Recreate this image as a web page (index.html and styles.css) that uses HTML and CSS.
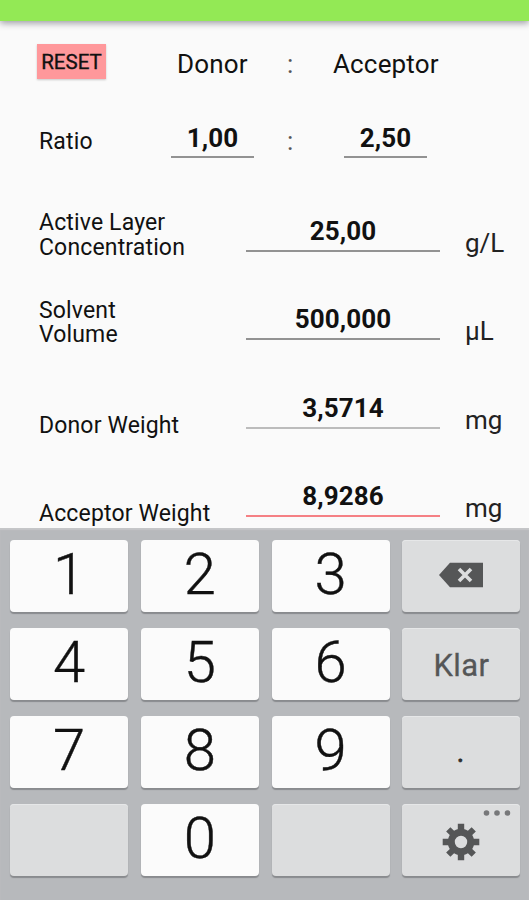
FILE: index.html
```html
<!DOCTYPE html>
<html lang="en">
<head>
<meta charset="utf-8">
<title>Solution calculator</title>
<link rel="stylesheet" href="styles.css">
</head>
<body>
<div class="screen">
  <header class="appbar"></header>
  <main class="form">
    <div class="row row-head">
      <button class="reset">RESET</button>
      <span class="heading">Donor</span>
      <span class="colon">:</span>
      <span class="heading heading-acceptor">Acceptor</span>
    </div>
    <div class="row row-ratio">
      <span class="label">Ratio</span>
      <span class="field">1,00</span>
      <span class="colon">:</span>
      <span class="field field-acceptor">2,50</span>
    </div>
    <div class="row row-value row-concentration">
      <span class="label">Active Layer<br>Concentration</span>
      <span class="field">25,00</span>
      <span class="unit">g/L</span>
    </div>
    <div class="row row-value row-volume">
      <span class="label label-tight">Solvent<br>Volume</span>
      <span class="field">500,000</span>
      <span class="unit">µL</span>
    </div>
    <div class="row row-value">
      <span class="label label-single">Donor Weight</span>
      <span class="field field-soft">3,5714</span>
      <span class="unit">mg</span>
    </div>
    <div class="row row-value">
      <span class="label label-single">Acceptor Weight</span>
      <span class="field field-active">8,9286</span>
      <span class="unit">mg</span>
    </div>
  </main>
  <section class="keyboard">
    <button class="key">1</button>
    <button class="key">2</button>
    <button class="key">3</button>
    <button class="key key-dim">
      <svg width="46" height="26" viewBox="0 0 46 26"><path d="M1 13 12 .8H45V25.2H12Z" fill="#555657"/><path d="m21 7 12 12M33 7 21 19" stroke="#dcddde" stroke-width="3.6"/></svg>
    </button>
    <button class="key">4</button>
    <button class="key">5</button>
    <button class="key">6</button>
    <button class="key key-dim key-done">Klar</button>
    <button class="key">7</button>
    <button class="key">8</button>
    <button class="key">9</button>
    <button class="key key-dim key-dot">.</button>
    <button class="key key-dim"></button>
    <button class="key">0</button>
    <button class="key key-dim"></button>
    <button class="key key-dim key-settings">
      <svg class="gear" width="38" height="38" viewBox="-19 -19 38 38">
        <g fill="#555657">
          <path d="M-3.2-18.3H3.2V-11H-3.2ZM-3.2 11H3.2V18.3H-3.2ZM-18.3-3.2H-11V3.2H-18.3ZM11-3.2H18.3V3.2H11Z"/>
          <path transform="rotate(45)" d="M-3-18H3V-11H-3ZM-3 11H3V18H-3ZM-18-3H-11V3H-18ZM11-3H18V3H11Z"/>
        </g>
        <circle r="9.7" fill="none" stroke="#555657" stroke-width="7"/>
      </svg>
      <svg class="more" width="28" height="6" viewBox="0 0 28 6" fill="#77787a"><circle cx="3.5" cy="3" r="2.8"/><circle cx="14" cy="3" r="2.8"/><circle cx="24.5" cy="3" r="2.8"/></svg>
    </button>
  </section>
</div>
</body>
</html>
```
FILE: styles.css
```css
* { box-sizing: border-box; }
body { margin: 0; font-family: Roboto, "Liberation Sans", sans-serif; color: #111; }
button { border: 0; margin: 0; padding: 0; font-family: inherit; color: inherit; }
.screen { width: 529px; height: 900px; display: flex; flex-direction: column; background: #fafafa; overflow: hidden; }
.appbar { height: 21px; flex: none; background: #93e955; box-shadow: 0 2px 7px rgba(0, 0, 20, .4); }
.form { height: 507px; flex: none; padding: 23px 0 0 39px; }
.row { display: grid; align-items: start; }
.row-head { grid-template-columns: 138px 104px 52px 1fr; height: 76px; }
.row-ratio { grid-template-columns: 132px 107px 66px 84px; height: 88px; }
.row-value { grid-template-columns: 207px 194px 1fr; height: 88.3px; }
.reset { width: 69px; height: 35px; margin-left: -2px; background: #ff989b; font-size: 20.5px; font-weight: 400; -webkit-text-stroke: .35px #111; line-height: 37px; box-shadow: 0 1px 2px rgba(0, 0, 0, .2); }
.heading { font-size: 26px; line-height: 30px; letter-spacing: .15px; margin-top: 5px; }
.colon { font-size: 26px; line-height: 30px; margin-top: 5px; padding-left: 6px; color: #555; }
.row-ratio .colon { margin-top: 6px; padding-left: 9px; }
.row-ratio .field { width: 83px; line-height: 36px; }
.label { font-size: 23px; line-height: 25px; letter-spacing: .15px; margin-top: 2px; white-space: nowrap; }
.row-ratio .label { margin-top: 9px; }
.label-tight { line-height: 24px; margin-top: 3px; }
.label-single { margin-top: 28px; }
.field { height: 38px; border-bottom: 2px solid #929292; text-align: center; font-size: 26px; font-weight: 700; line-height: 35px; letter-spacing: .1px; }
.row-value .field { margin-top: 6px; }
.field-soft { border-color: #bcbcbc; }
.field-active { border-color: #f58084; }
.unit { font-size: 26px; line-height: 30px; margin: 20px 0 0 25px; color: #222; }
.keyboard { flex: 1; padding: 12px 9px 0 10px; display: grid; grid-template-columns: repeat(4, 118px); grid-auto-rows: 72px; gap: 16px 12.8px; background: #b7b9bc; box-shadow: inset 0 2px 1px #c5c6c8; }
.key { display: flex; align-items: center; justify-content: center; position: relative; padding-bottom: 4px; border-radius: 4px; background: #fbfbfb; box-shadow: 0 2px 1px #898b8e; font-size: 58px; font-weight: 300; line-height: 68px; -webkit-text-stroke: .4px #111; }
.key-dim { background: #dcddde; box-shadow: 0 2px 1px #898b8e, inset 0 1px #e6e7e8; padding-bottom: 2px; }
.key-done { font-size: 31px; font-weight: 400; letter-spacing: .4px; color: #555657; -webkit-text-stroke: .3px #555657; padding: 4px 0 0; }
.key-dot { font-size: 30px; font-weight: 400; color: #333; padding: 0 2px 1px 0; }
.key-settings { padding: 4px 0 0; }
.more { position: absolute; top: 6px; right: 9px; }
```
